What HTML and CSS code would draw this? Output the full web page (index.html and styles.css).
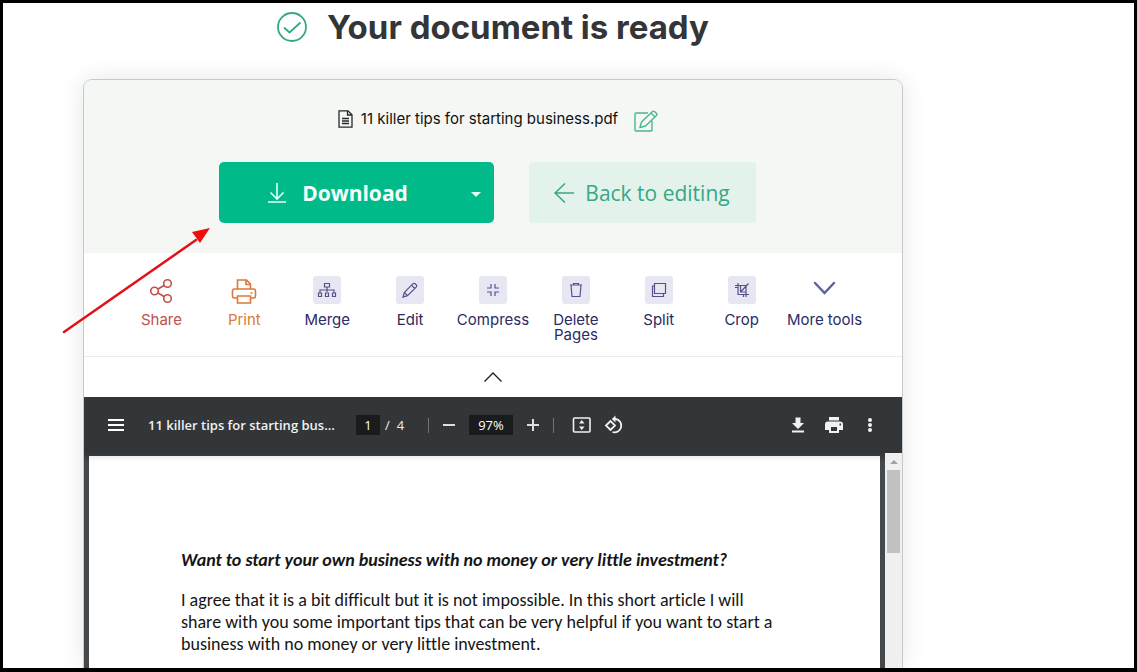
FILE: index.html
```html
<!DOCTYPE html>
<html lang="en">
<head>
<meta charset="utf-8">
<title>Your document is ready</title>
<link rel="stylesheet" href="styles.css">
</head>
<body>
<main class="screen">
  <header class="heading">
    <svg class="check" viewBox="0 0 30 30" width="30" height="30" fill="none" stroke="#37a785" stroke-width="1.800"><circle cx="15" cy="15" r="14"/><path d="M7 15.500L12.500 20.500L23.500 10.500"/></svg>
    <h1>Your document is ready</h1>
  </header>

  <section class="card">
    <div class="summary">
      <div class="file">
        <svg viewBox="0 0 15 18" width="15" height="18" fill="none" stroke="#28282c" stroke-width="1.300"><path d="M1 .8H10L14 4.800V17.200H1ZM9.500 1V5H14M4 8.500H11M4 11H11M4 13.500H11"/></svg>
        <span class="file-name">11 killer tips for starting business.pdf</span>
        <button class="icon-button rename" aria-label="Rename">
          <svg viewBox="0 0 24 22" width="24" height="22" fill="none" stroke="#48b791" stroke-width="1.400" stroke-linejoin="round"><path d="M14 3H2Q1 3 1 4V20Q1 21 2 21H17Q18 21 18 20V11M6 17.500L7.500 12L18.500 1.500Q19.500 .8 20.500 1.500L22.500 3.500Q23.200 4.500 22.500 5.500L11.500 16ZM17 3L21 7"/></svg>
        </button>
      </div>
      <div class="actions">
        <div class="download">
          <button class="download-main">
            <svg viewBox="0 0 18 20" width="18" height="20" fill="none" stroke="#e6fff7" stroke-width="1.600"><path d="M9 0V16M2.500 9.500L9 16L15.500 9.500M0 19H18"/></svg>
            Download
          </button>
          <button class="download-more" aria-label="More download options"><svg viewBox="0 0 10 5" width="10" height="5"><path d="M0 0H10L5 5Z" fill="#e6fff7"/></svg></button>
        </div>
        <button class="back">
          <svg viewBox="0 0 20 20" width="20" height="20" fill="none" stroke="#37a785" stroke-width="1.500"><path d="M11 .5L1 10L11 19.500M1 10H20"/></svg>
          Back to editing
        </button>
      </div>
    </div>

    <nav class="tools">
      <button class="tool share">
        <svg class="glyph" viewBox="0 0 28 28" width="28" height="28" fill="none" stroke="currentColor" stroke-width="1.600"><circle cx="7.500" cy="15" r="3.800"/><circle cx="20.500" cy="7.500" r="3.800"/><circle cx="20.500" cy="22.500" r="3.800"/><path d="M11 13L17 9.500M11 17L17 20.500"/></svg>
        <span>Share</span>
      </button>
      <button class="tool print">
        <svg class="glyph" viewBox="0 0 28 28" width="28" height="28" fill="none" stroke="currentColor" stroke-width="1.600"><path d="M7.500 13V4H16.500L20.500 8V13M16 4V8.500H20.500M7.500 22H4.500Q2.500 22 2.500 20V15Q2.500 13 4.500 13H23.500Q25.500 13 25.500 15V20Q25.500 22 23.500 22H20.500M7.500 20H20.500V27H7.500ZM20.500 17H22.500"/></svg>
        <span>Print</span>
      </button>
      <button class="tool">
        <svg class="glyph tile" viewBox="0 0 28 28" width="28" height="28"><path d="M11.500 7.500H16.500V11H11.500ZM14 11V16M7 17V14H21V17M5.500 17H8.500V20.500H5.500ZM12.500 17H15.500V20.500H12.500ZM19.500 17H22.500V20.500H19.500Z"/></svg>
        <span>Merge</span>
      </button>
      <button class="tool">
        <svg class="glyph tile" viewBox="0 0 28 28" width="28" height="28"><path d="M7 21L8.300 16.500L17 7.700Q18.300 6.700 19.500 8L20.300 8.800Q21.300 10 20.200 11.200L11.500 19.700ZM15.500 9.200L18.800 12.500M8.300 16.500L11.500 19.700"/></svg>
        <span>Edit</span>
      </button>
      <button class="tool">
        <svg class="glyph tile" viewBox="0 0 28 28" width="28" height="28"><path d="M12 8V12H8M16 8V12H20M8 16H12V20M20 16H16V20"/></svg>
        <span>Compress</span>
      </button>
      <button class="tool">
        <svg class="glyph tile" viewBox="0 0 28 28" width="28" height="28"><path d="M8 9H20M11.500 9V7.500H16.500V9M9 9L10 20.500H18L19 9"/></svg>
        <span>Delete Pages</span>
      </button>
      <button class="tool">
        <svg class="glyph tile" viewBox="0 0 28 28" width="28" height="28"><path d="M9.500 7.500H20.500V17.500H9.500ZM9.500 10H7.500V20.500H18.500V17.500"/></svg>
        <span>Split</span>
      </button>
      <button class="tool">
        <svg class="glyph tile" viewBox="0 0 28 28" width="28" height="28"><path d="M10 7V18.500H21M7 9.500H18V21M12.500 9.500V16H18M12.500 16L20.500 7.500M7 11.500H10M15.500 18.500V21"/></svg>
        <span>Crop</span>
      </button>
      <button class="tool">
        <svg class="glyph chevron" viewBox="0 0 28 28" width="28" height="28" fill="none" stroke="#5c649c" stroke-width="2.500" stroke-linecap="round"><path d="M4 7L13.500 17L23 7"/></svg>
        <span>More tools</span>
      </button>
    </nav>

    <button class="collapse" aria-label="Collapse tools"><svg viewBox="0 0 18 10" width="18" height="10" fill="none" stroke="#222" stroke-width="1.400"><path d="M.5 9.500L9 1L17.500 9.500"/></svg></button>

    <div class="viewer">
      <div class="toolbar">
        <button class="icon-button" aria-label="Menu"><svg viewBox="0 0 24 24" width="24" height="24"><path fill="#fff" d="M4 6H20V8H4ZM4 11H20V13H4ZM4 16H20V18H4Z"/></svg></button>
        <strong class="doc-title">11 killer tips for starting bus...</strong>
        <div class="pager">
          <input class="field page-field" aria-label="Page number" value="1"><span>/</span><span>4</span>
        </div>
        <i class="divider"></i>
        <div class="zoom">
          <button class="icon-button" aria-label="Zoom out"><svg viewBox="0 0 12 12" width="12" height="12"><path fill="#ddd" d="M0 5H12V7H0Z"/></svg></button>
          <input class="field zoom-field" aria-label="Zoom" value="97%">
          <button class="icon-button" aria-label="Zoom in"><svg viewBox="0 0 12 12" width="12" height="12"><path fill="#ddd" d="M0 5H5V0H7V5H12V7H7V12H5V7H0Z"/></svg></button>
        </div>
        <i class="divider"></i>
        <div class="fit">
          <button class="icon-button" aria-label="Fit to page"><svg viewBox="0 0 20 20" width="20" height="20"><rect x="1.500" y="3" width="16.500" height="14" rx="1" fill="none" stroke="#f1f1f1" stroke-width="1.600"/><path fill="#f1f1f1" d="M9.750 5L12.500 8.500H7ZM9.750 15L12.500 11.500H7Z"/></svg></button>
          <button class="icon-button" aria-label="Rotate"><svg viewBox="0 0 20 20" width="20" height="20" fill="none" stroke="#f1f1f1" stroke-width="1.800"><path d="M2 10.500L6.500 6L11 10.500L6.500 15ZM9 4H11.500A6.700 6.700 0 1 1 8.500 17"/><path d="M11.500 .5V7.500L7.800 4Z" fill="#f1f1f1" stroke="none"/></svg></button>
        </div>
        <div class="file-actions">
          <button class="icon-button" aria-label="Download"><svg viewBox="0 0 24 24" width="24" height="24" fill="#f1f1f1"><path d="M9.500 4.500H14.500V10H18L12 16L6 10H9.500ZM6 17.500H18V19.500H6Z"/></svg></button>
          <button class="icon-button" aria-label="Print"><svg viewBox="0 0 24 24" width="24" height="24" fill="#f1f1f1"><path fill-rule="evenodd" d="M7 4H17V7.500H7ZM6 8.500H18Q21 8.500 21 11.500V17H17V20H7V17H3V11.500Q3 8.500 6 8.500ZM9 14V18H15V14ZM17.500 10.500V12.500H19V10.500Z"/></svg></button>
          <button class="icon-button" aria-label="More"><svg viewBox="0 0 24 24" width="24" height="24" fill="#f1f1f1"><circle cx="12" cy="7" r="2"/><circle cx="12" cy="12" r="2"/><circle cx="12" cy="17" r="2"/></svg></button>
        </div>
      </div>
      <div class="stage">
        <article class="page">
          <h2>Want to start your own business with no money or very little investment?</h2>
          <p>I agree that it is a bit difficult but it is not impossible. In this short article I will share with you some important tips that can be very helpful if you want to start a business with no money or very little investment.</p>
        </article>
        <div class="scrollbar">
          <svg viewBox="0 0 8 4" width="8" height="4"><path d="M4 0L8 4H0Z" fill="#a3a3a3"/></svg>
          <div class="thumb"></div>
        </div>
      </div>
    </div>
  </section>
</main>
<svg class="pointer" viewBox="0 0 150 110" width="150" height="110"><path d="M2 106L134 14" stroke="#e01218" stroke-width="2.500" stroke-linecap="round"/><path d="M148 2L138 17L130 6Z" fill="#f30b0b"/></svg>
</body>
</html>
```

FILE: styles.css
```css
* { box-sizing: border-box; }

body {
  margin: 0;
  height: 100vh;
  overflow: hidden;
  border: solid #000;
  border-width: 3px 3px 4px;
  background: #fff;
  font-family: Inter, "Liberation Sans", sans-serif;
}

button {
  margin: 0;
  padding: 0;
  border: 0;
  background: none;
  font: inherit;
  color: inherit;
}

svg { flex: none; display: block; }

.screen {
  display: flex;
  flex-direction: column;
  height: 100%;
  padding: 0 231px 0 80px;
}

.heading {
  display: flex;
  justify-content: center;
  align-items: center;
  gap: 20px;
  height: 48px;
}

.heading h1 {
  margin: 0;
  font-size: 33px;
  line-height: 48px;
  font-weight: 700;
  color: #333536;
  white-space: nowrap;
}

.card {
  flex: 1;
  min-height: 0;
  display: flex;
  flex-direction: column;
  margin-top: 28px;
  border: 1px solid #c8caca;
  border-bottom: 0;
  border-radius: 9px 9px 0 0;
  box-shadow: 0 0 24px rgba(0, 0, 0, 0.1);
  overflow: hidden;
  background: #fff;
}

.summary {
  padding: 27px 24px 30px;
  background: #f4f7f4;
}

.file {
  display: flex;
  justify-content: center;
  align-items: center;
  gap: 8px;
  height: 24px;
  padding-left: 10px;
}

.file-name {
  font-size: 15px;
  line-height: 24px;
  color: #111;
}

.rename { margin: 4px 0 0 8px; }

.actions {
  display: flex;
  justify-content: center;
  gap: 35px;
  margin-top: 31px;
  padding-right: 12px;
  font-family: "Open Sans", "Noto Sans", sans-serif;
  font-size: 21px;
}

.download {
  display: flex;
  width: 275px;
  height: 61px;
  border-radius: 5px;
  background: #00bb89;
  color: #f4fffb;
}

.download-main {
  flex: 1;
  display: flex;
  align-items: center;
  justify-content: center;
  gap: 16px;
  font-weight: 700;
}

.download-more {
  display: flex;
  align-items: center;
  justify-content: center;
  width: 36px;
  padding-top: 4px;
}

.back {
  display: flex;
  align-items: center;
  justify-content: center;
  gap: 11px;
  width: 227px;
  height: 61px;
  border-radius: 4px;
  background: #e3f3ec;
  color: #37a785;
}

.tools {
  display: grid;
  grid-template-columns: repeat(9, 1fr);
  align-items: start;
  height: 104px;
  padding: 23px 36px 0;
  border-bottom: 1px solid #ebebeb;
  color: #2c2a63;
}

.tool {
  display: flex;
  flex-direction: column;
  align-items: center;
  gap: 8px;
  font-size: 15px;
  line-height: 15px;
}

.tile {
  border-radius: 3px;
  background: #e7e7f3;
  fill: none;
  stroke: #58508a;
  stroke-width: 1.2;
}

.share { color: #c0504a; }
.print { color: #d97a3a; }

.collapse {
  display: flex;
  align-items: center;
  justify-content: center;
  height: 40px;
}

.viewer {
  flex: 1;
  min-height: 0;
  display: flex;
  flex-direction: column;
  background: #46494c;
}

.toolbar {
  flex: none;
  display: flex;
  align-items: center;
  height: 56px;
  padding: 0 20px;
  background: #323639;
  color: #f1f1f1;
  font-family: "Open Sans", "Noto Sans", sans-serif;
  font-size: 13px;
}

.doc-title {
  width: 188px;
  margin: 0 20px;
  font-weight: 600;
  white-space: nowrap;
}

.field {
  height: 20px;
  padding: 0;
  border: 0;
  background: #191b1c;
  color: #fff;
  font: inherit;
  text-align: center;
}

.page-field { width: 24px; }
.zoom-field { width: 44px; }

.pager { display: flex; align-items: center; gap: 5px; width: 72px; }
.pager span + span { padding-left: 2px; }
.zoom { display: flex; align-items: center; gap: 14px; margin: 0 14px; }
.divider { width: 1px; height: 15px; background: #707376; }
.fit { display: flex; gap: 12px; margin-left: 18px; }
.file-actions { display: flex; gap: 12px; margin-left: auto; }

.stage {
  flex: 1;
  min-height: 0;
  display: flex;
  padding-left: 5px;
  background: linear-gradient(#323639, #46494c 10px);
}

.page {
  flex: 1;
  margin: 3px 5px 0 0;
  padding: 93px 100px 0 92px;
  background: linear-gradient(#eee, #fff 6px);
  color: #151515;
  font-family: Carlito, Calibri, Lato, sans-serif;
  font-size: 18px;
  line-height: 22px;
  font-variant-ligatures: none;
}

.page h2 {
  margin: 0 0 18px;
  font-size: 18px;
  line-height: 22px;
  font-style: italic;
  font-weight: 700;
  white-space: nowrap;
}

.page p { margin: 0; }

.scrollbar {
  display: flex;
  flex-direction: column;
  align-items: center;
  gap: 6px;
  width: 17px;
  padding-top: 7px;
  background: #f0f0f0;
}

.thumb { width: 13px; height: 83px; background: #c1c1c1; }

/* Hand-drawn arrow lying over the page */
.pointer {
  position: absolute;
  left: 62px;
  top: 226px;
}
```
